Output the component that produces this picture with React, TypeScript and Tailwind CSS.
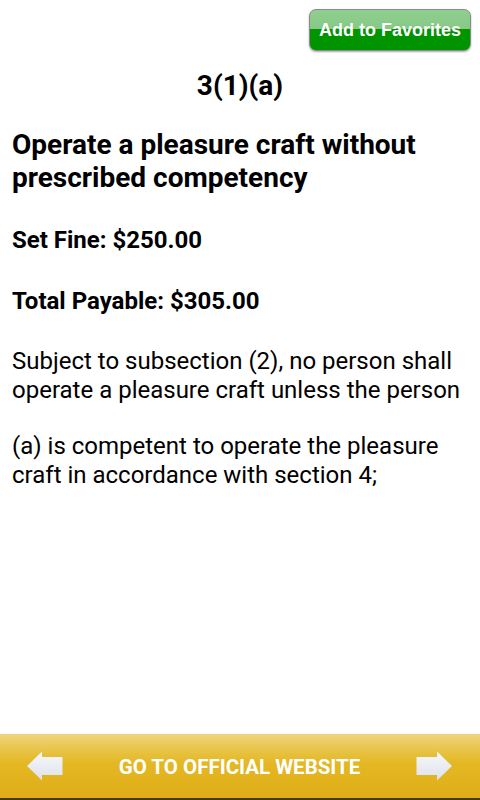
const Arrow = ({ dir }: { dir: "left" | "right" }) => (
  <svg
    width="36"
    height="30"
    viewBox="0 0 36 30"
    className={dir === "right" ? "-scale-x-100" : ""}
  >
    <defs>
      <linearGradient id={`arrowFill-${dir}`} x1="0" y1="0" x2="0" y2="1">
        <stop offset="0" stopColor="#f7f8fb" />
        <stop offset="1" stopColor="#dce1ea" />
      </linearGradient>
    </defs>
    <path
      d="M0 15 L15 0.5 L15 6 L35.5 6 L35.5 24 L15 24 L15 29.5 Z"
      fill={`url(#arrowFill-${dir})`}
    />
  </svg>
);

const App = () => {
  return (
    <div className="flex h-[800px] w-[480px] flex-col bg-white font-['Roboto',sans-serif] text-black">
      {/* Top action */}
      <div className="flex justify-end pr-[9px] pt-[9px]">
        <button className="relative h-[42px] w-[162px] overflow-hidden rounded-[7px] border border-[#8a8a8a] bg-[linear-gradient(to_bottom,#8fcf8f_0%,#86c986_48%,#009600_48%,#009400_100%)] shadow-[0_1px_2px_rgba(0,0,0,0.35)]">
          <span className="pt-px font-['Liberation_Sans',Arial,sans-serif] text-[18px] font-bold text-white [text-shadow:0_0_1px_rgba(0,0,0,0.2)]">
            Add to Favorites
          </span>
        </button>
      </div>

      {/* Content */}
      <div className="flex-1 px-3">
        <h1 className="mt-[18px] text-center text-[28px] font-bold leading-[33px]">
          3(1)(a)
        </h1>
        <h2 className="mt-[26px] text-[28px] font-bold leading-[33px]">
          Operate a pleasure craft without prescribed competency
        </h2>
        <p className="mt-[32px] text-[24px] font-bold leading-[29px]">
          Set Fine: $250.00
        </p>
        <p className="mt-[32px] text-[24px] font-bold leading-[29px]">
          Total Payable: $305.00
        </p>
        <p className="mt-[31px] text-[24px] leading-[29px]">
          Subject to subsection (2), no person shall operate a pleasure craft
          unless the person
        </p>
        <p className="mt-[27px] text-[24px] leading-[29px]">
          (a) is competent to operate the pleasure craft in accordance with
          section 4;
        </p>
      </div>

      {/* Bottom bar */}
      <div className="flex h-[66px] items-center justify-between border-b-2 border-[#4a3c08] bg-[linear-gradient(to_bottom,#efd57e_0%,#e8c447_25%,#e4b824_45%,#dfad16_100%)] pl-[27px] pr-[28px]">
        <Arrow dir="left" />
        <span className="pt-[3px] text-[20.5px] font-bold text-white">
          GO TO OFFICIAL WEBSITE
        </span>
        <Arrow dir="right" />
      </div>
    </div>
  );
};

export default App;
